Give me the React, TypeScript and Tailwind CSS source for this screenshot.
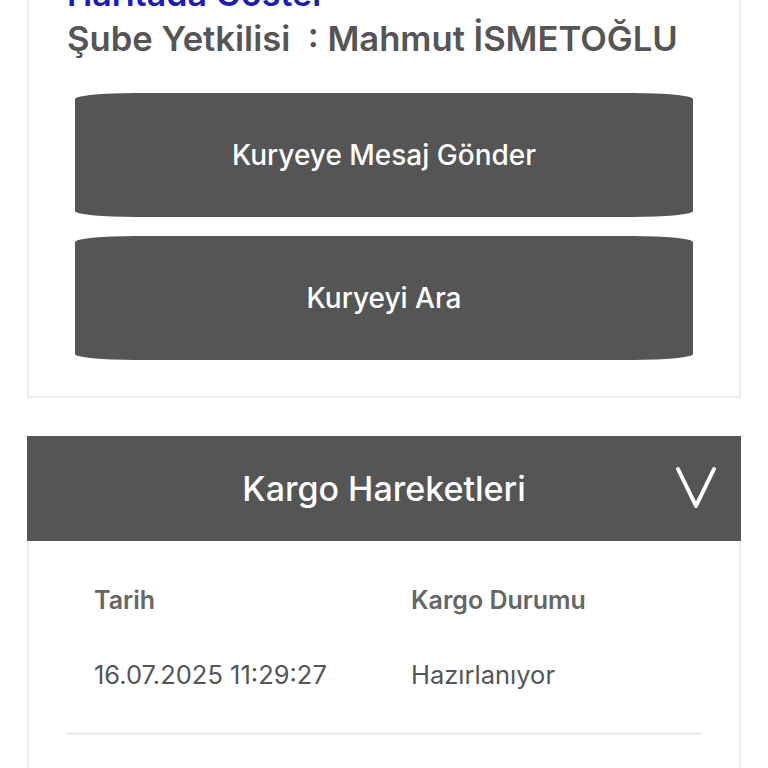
export default function App() {
  return (
    <div className="w-[768px] h-[768px] overflow-hidden bg-white font-['Inter','Liberation_Sans',sans-serif]">
      {/* Şube bilgileri */}
      <div className="mx-[27px] border-2 border-t-0 border-[#ececec] pb-[36px]">
        <div className="ml-[38px] -mt-[24px] text-[34px] leading-[36px] font-semibold text-[#1c1cb4]">
          Haritada Göster
        </div>
        <div className="ml-[38px] mt-[6px] text-[34.6px] leading-[40px] font-semibold text-[#555555] whitespace-pre">
          Şube Yetkilisi  : Mahmut İSMETOĞLU
        </div>
        <div className="mx-[46px] mt-[35px] flex flex-col gap-[19px]">
          <button
            type="button"
            className="h-[124px] w-full rounded-[60px_/_6px] bg-[#555555] text-[28px] font-medium text-white"
          >
            Kuryeye Mesaj Gönder
          </button>
          <button
            type="button"
            className="h-[124px] w-full rounded-[60px_/_6px] bg-[#555555] text-[28px] font-medium text-white"
          >
            Kuryeyi Ara
          </button>
        </div>
      </div>

      {/* Kargo hareketleri */}
      <div className="mx-[27px] mt-[38px]">
        <div className="relative flex h-[105px] items-center justify-center bg-[#555555]">
          <span className="text-[34px] font-medium text-white">Kargo Hareketleri</span>
          <svg
            className="absolute right-[24px] top-[30px]"
            width="42"
            height="44"
            viewBox="0 0 42 44"
            fill="none"
            stroke="white"
            strokeWidth="4"
            strokeLinecap="round"
            strokeLinejoin="round"
          >
            <path d="M3 3 L21 40 L39 3" />
          </svg>
        </div>
        <div className="border-x-2 border-[#ececec] px-[37px] pb-[40px]">
          <div className="grid grid-cols-[317px_1fr] px-[28px] pt-[41px] text-[25px] font-semibold text-[#666666]">
            <span>Tarih</span>
            <span>Kargo Durumu</span>
          </div>
          <div className="grid grid-cols-[317px_1fr] px-[28px] pt-[36px] pb-[38px] text-[25.5px] text-[#555555]">
            <span>16.07.2025 11:29:27</span>
            <span>Hazırlanıyor</span>
          </div>
          <div className="h-[3px] bg-[#f0f0f0]" />
        </div>
      </div>
    </div>
  )
}
